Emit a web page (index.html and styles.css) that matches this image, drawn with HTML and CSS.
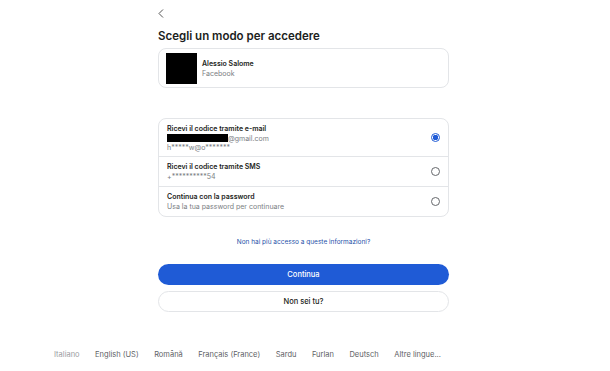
FILE: index.html
```html
<!DOCTYPE html>
<html lang="it">
<head>
    <meta charset="UTF-8">
    <meta name="viewport" content="width=device-width, initial-scale=1.0">
    <title>Scegli un modo per accedere</title>
    <link rel="stylesheet" href="styles.css">
</head>
<body>
<div class="page">
    <main class="panel">
        <button class="back" aria-label="Indietro">
            <svg width="6" height="9" viewBox="0 0 6 9"><path d="M5 0.5 L1 4.5 L5 8.5" fill="none" stroke="#555" stroke-width="1"/></svg>
        </button>
        <h1>Scegli un modo per accedere</h1>

        <div class="profile">
            <div class="avatar"></div>
            <div>
                <div class="name">Alessio Salome</div>
                <div class="sub">Facebook</div>
            </div>
        </div>

        <!-- opzioni di verifica -->
        <div class="options">
            <label class="option">
                <div class="option-text">
                    <div class="opt-title">Ricevi il codice tramite e-mail</div>
                    <div class="sub"><span class="redact"></span>@gmail.com</div>
                    <div class="sub">h*****w@o*******</div>
                </div>
                <span class="radio checked"></span>
            </label>
            <label class="option">
                <div class="option-text">
                    <div class="opt-title">Ricevi il codice tramite SMS</div>
                    <div class="sub">+**********54</div>
                </div>
                <span class="radio"></span>
            </label>
            <label class="option">
                <div class="option-text">
                    <div class="opt-title">Continua con la password</div>
                    <div class="sub">Usa la tua password per continuare</div>
                </div>
                <span class="radio"></span>
            </label>
        </div>

        <a class="help" href="#">Non hai più accesso a queste informazioni?</a>

        <button class="btn primary">Continua</button>
        <button class="btn secondary">Non sei tu?</button>
    </main>

    <footer class="langs">
        <span class="current">Italiano</span>
        <a href="#">English (US)</a>
        <a href="#">Română</a>
        <a href="#">Français (France)</a>
        <a href="#">Sardu</a>
        <a href="#">Furlan</a>
        <a href="#">Deutsch</a>
        <a href="#">Altre lingue...</a>
    </footer>
</div>
</body>
</html>
```

FILE: styles.css
```css
:root {
    --blue: #1f5bd6;
    --border: #e3e5e8;
    --text: #1c1e21;
    --muted: #7a7e83;
}
body {
    margin: 0;
    font-family: Inter, Roboto, "Noto Sans", sans-serif;
    color: var(--text);
    background: #fff;
}
.page { width: 610px; height: 371px; position: relative; }
.panel {
    width: 291px;
    margin: 0 0 0 158px;
    padding-top: 9px;
    display: flex;
    flex-direction: column;
}
.back {
    background: none; border: none; padding: 0;
    width: 6px; height: 9px; display: block; cursor: pointer;
}
.back svg { display: block; }
h1 {
    font-size: 11.5px;
    font-weight: 600;
    margin: 10px 0 0;
    line-height: 16px;
}
.profile {
    margin-top: 4px;
    border: 1px solid var(--border);
    border-radius: 8px;
    height: 40px;
    box-sizing: border-box;
    display: flex;
    align-items: center;
    padding: 0 7px;
    gap: 5px;
}
.avatar { width: 31px; height: 31px; background: #000; }
.name { font-size: 7px; font-weight: 600; line-height: 10px; }
.sub { font-size: 7px; color: var(--muted); line-height: 9px; }
.options {
    margin-top: 30px;
    border: 1px solid var(--border);
    border-radius: 8px;
}
.option {
    display: flex;
    align-items: center;
    justify-content: space-between;
    padding: 0 8px;
    border-top: 1px solid var(--border);
    cursor: pointer;
}
.option:first-child { border-top: none; height: 37px; }
.option:nth-child(2) { height: 29px; }
.option:nth-child(3) { height: 29px; }
.opt-title { font-size: 7px; font-weight: 600; line-height: 10px; }
.redact {
    display: inline-block;
    width: 61px; height: 8px;
    background: #000;
    vertical-align: -1px;
}
.radio {
    width: 9px; height: 9px;
    border: 1px solid #65676b;
    border-radius: 50%;
    box-sizing: border-box;
}
.radio.checked {
    border-color: var(--blue);
    background: radial-gradient(circle, var(--blue) 0 2.6px, #fff 3px);
}
.help {
    margin-top: 21px;
    text-align: center;
    font-size: 6.5px;
    color: #1d4fa8;
    text-decoration: none;
    line-height: 9px;
}
.btn {
    font-family: inherit;
    font-size: 7.5px;
    font-weight: 500;
    height: 21px;
    border-radius: 11px;
    cursor: pointer;
}
.primary {
    margin-top: 17px;
    background: var(--blue);
    color: #fff;
    border: none;
}
.secondary {
    margin-top: 6px;
    background: #fff;
    color: var(--text);
    border: 1px solid var(--border);
}
.langs {
    position: absolute;
    left: 54px;
    top: 350px;
    display: flex;
    gap: 15.5px;
    font-size: 7.5px;
}
.langs a { color: #5e6165; text-decoration: none; }
.langs .current { color: #9a9da1; }
```
